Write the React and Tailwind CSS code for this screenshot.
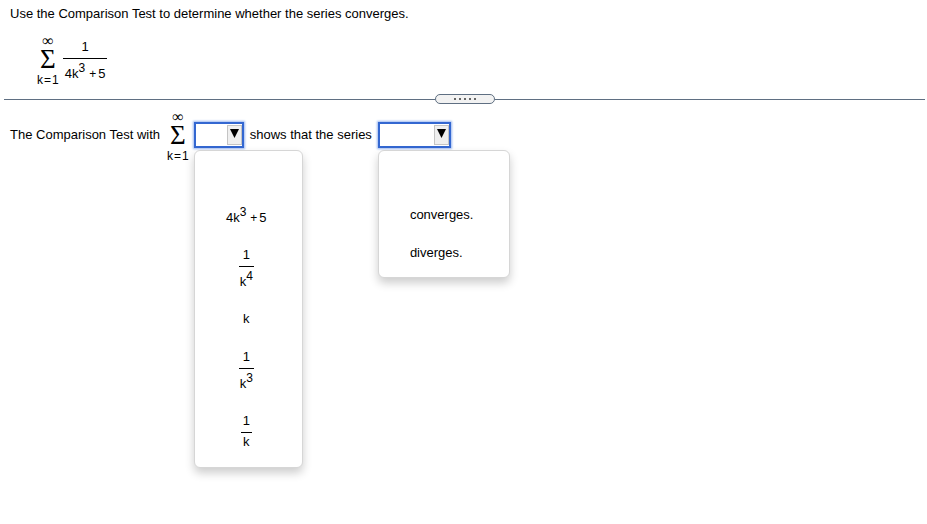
import { useState } from "react";
import clsx from "clsx";

const Cubic = () => (
  <span className="whitespace-nowrap">
    4k<sup className="text-[12px]">3</sup><span className="pl-1 text-[12px]">+</span><span className="pl-0.5">5</span>
  </span>
);

function Power({ exp }) {
  return <span>k<sup className="text-[12px]">{exp}</sup></span>;
}

function Fraction({ children, raised, padding = "px-px" }) {
  return (
    <span className="inline-flex flex-col items-center align-middle">
      <span className="h-[18px] leading-[14px]">1</span>
      <span className={clsx("border-t border-black text-center leading-[14px]", padding, raised ? "h-[22px] pt-2" : "h-[17px] pt-0.5")}>
        {children}
      </span>
    </span>
  );
}

function Sigma() {
  return (
    <span className="inline-flex flex-col items-center">
      <span className="h-2 font-['Liberation_Serif',serif] text-[16px] leading-[8px]">∞</span>
      <span className="h-7 font-['Liberation_Serif',serif] text-[27px] leading-[28px]">Σ</span>
      <span className="flex h-[14px] gap-px text-[12px] leading-[14px]">
        <span>k</span><span>=</span><span>1</span>
      </span>
    </span>
  );
}

function Dropdown({ label, options, width, menuWidth, centered }) {
  const [value, setValue] = useState("");

  return (
    <div className={clsx("relative", width)}>
      <select
        aria-label={label}
        value={value}
        onChange={(e) => setValue(e.target.value)}
        className="block h-[26px] w-full appearance-none border-2 border-[#3367d1] bg-white pl-1 text-[13px] shadow-[0_0_2px_1px_#9db9f0] outline-none"
      >
        <option value="" />
        {options.map((o) => <option key={o.value} value={o.value}>{o.value}</option>)}
      </select>
      <span className="pointer-events-none absolute top-[3px] right-0.5 grid h-5 w-[15px] place-items-center border border-[#c4c4c4] bg-[#efefef] pb-1">
        <svg width="9" height="9" viewBox="0 0 9 9" aria-hidden="true">
          <path d="M0 0h9L4.5 9z" fill="#000" />
        </svg>
      </span>

      <ul
        role="listbox"
        aria-label={label}
        className={clsx("absolute top-7 left-0 rounded-md border border-[#d6d6d6] bg-white pt-[7px] pb-[5px] shadow-[0_5px_10px_rgba(0,0,0,0.2)]", menuWidth)}
      >
        <li role="option" aria-label="No answer" aria-selected={value === ""} onClick={() => setValue("")} className="h-[38px]" />
        {options.map((o) => (
          <li
            key={o.value}
            role="option"
            aria-selected={value === o.value}
            onClick={() => setValue(o.value)}
            className={clsx("flex cursor-pointer items-start py-3 leading-[14px]", centered ? "justify-center pr-1" : "pl-[31px]", o.height)}
          >
            {o.content || o.value}
          </li>
        ))}
      </ul>
    </div>
  );
}

const SERIES = [
  { value: "4k^3 + 5", content: <span className="pt-[3px]"><Cubic /></span>, height: "h-10" },
  { value: "1/k^4", content: <Fraction raised><Power exp={4} /></Fraction>, height: "h-16" },
  { value: "k", height: "h-[38px]" },
  { value: "1/k^3", content: <Fraction raised><Power exp={3} /></Fraction>, height: "h-16" },
  { value: "1/k", content: <Fraction padding="px-0.5">k</Fraction>, height: "h-[60px]" },
];

const RESULTS = [
  { value: "converges.", height: "h-[38px]" },
  { value: "diverges.", height: "h-[38px]" },
];

export default function App() {
  return (
    <main className="min-h-screen bg-white font-['Liberation_Sans',Arial,sans-serif] text-[13px] text-black">
      {/* question */}
      <section className="px-[10px] pt-1.5">
        <p className="leading-[15px]">Use the Comparison Test to determine whether the series converges.</p>
        <div className="flex items-start gap-1 pt-4 pl-[27px]">
          <Sigma />
          <span className="pt-[3px]"><Fraction raised padding="px-0.5"><Cubic /></Fraction></span>
        </div>
      </section>

      {/* splitter */}
      <div className="mt-[7px] flex items-center pr-0.5 pl-1">
        <span className="h-px flex-1 bg-[#5f6f82]" />
        <button type="button" aria-label="Resize panels" className="flex h-[10px] w-[60px] items-center justify-center gap-[3px] rounded-full border border-[#5f6f82] bg-[#f2f2f2]">
          {[0, 1, 2, 3, 4].map((i) => <span key={i} className="size-0.5 bg-[#666]" />)}
        </button>
        <span className="h-px flex-1 bg-[#5f6f82]" />
      </div>

      {/* answer */}
      <section className="flex items-start px-[10px] pt-[3px]">
        <span className="pt-5 leading-[15px] whitespace-nowrap">The Comparison Test with</span>
        <span className="pt-px pl-[7px]"><Sigma /></span>
        <div className="pt-[15px] pl-[5px]">
          <Dropdown label="Comparison series" options={SERIES} width="w-[50px]" menuWidth="w-[109px]" centered />
        </div>
        <span className="pt-5 pl-1.5 leading-[15px] whitespace-nowrap">shows that the series</span>
        <div className="pt-[15px] pl-1.5">
          <Dropdown label="Convergence result" options={RESULTS} width="w-[73px]" menuWidth="w-[132px]" />
        </div>
      </section>
    </main>
  );
}
